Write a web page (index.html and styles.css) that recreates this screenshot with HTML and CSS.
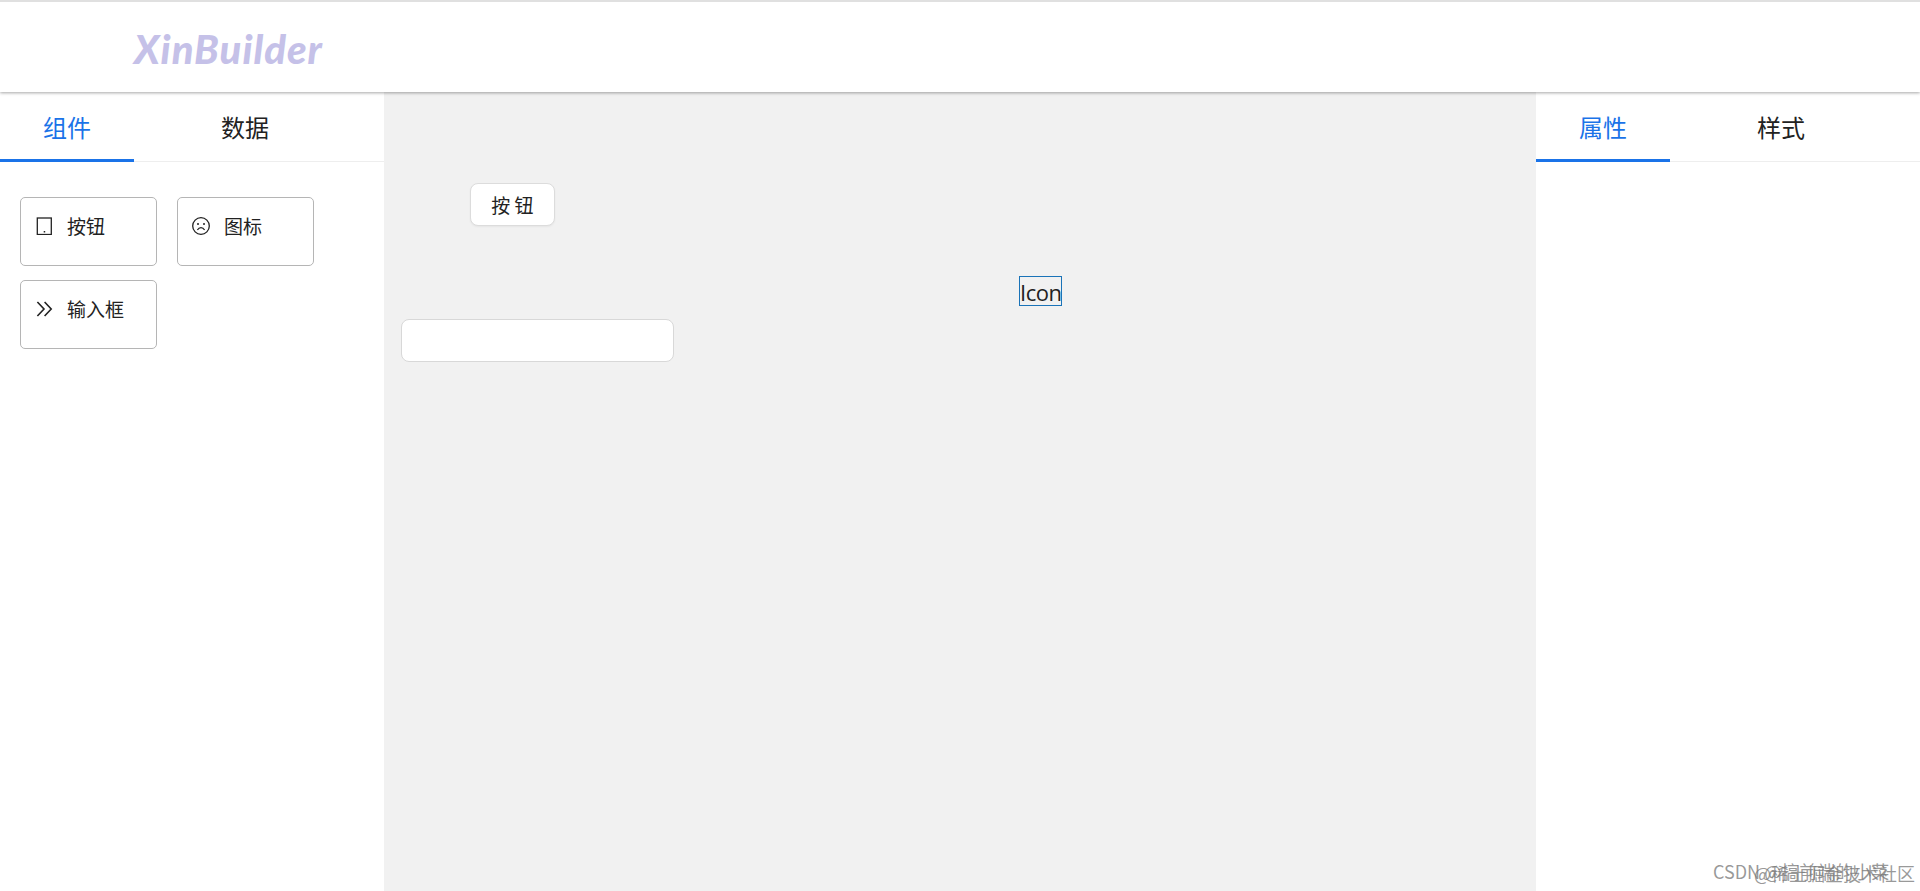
FILE: index.html
```html
<!DOCTYPE html>
<html lang="en">
<head>
  <meta charset="UTF-8">
  <title>XinBuilder</title>
  <link rel="stylesheet" href="styles.css">
</head>
<body>
  <header class="topbar">
    <div class="logo">XinBuilder</div>
  </header>

  <main class="workspace">
    <aside class="panel panel-left">
      <div class="tabs">
        <div class="tab active">组件</div>
        <div class="tab">数据</div>
      </div>
      <div class="palette">
        <div class="palette-item">
          <svg class="palette-icon" viewBox="0 0 18 18" fill="none" stroke="#222" stroke-width="1.3">
            <rect x="2.300" y="1" width="14" height="16.500"/>
            <rect x="8.700" y="14" width="1.500" height="1.500" fill="#222" stroke="none"/>
          </svg>
          <span>按钮</span>
        </div>
        <div class="palette-item">
          <svg class="palette-icon" viewBox="0 0 18 18" fill="none" stroke="#222" stroke-width="1.3">
            <circle cx="9" cy="9" r="8.300"/>
            <circle cx="6" cy="7" r="1" fill="#222" stroke="none"/>
            <circle cx="12" cy="7" r="1" fill="#222" stroke="none"/>
            <path d="M5.400 13c1-1.600 2.200-2.300 3.600-2.300s2.600.7 3.600 2.300"/>
          </svg>
          <span>图标</span>
        </div>
        <div class="palette-item">
          <svg class="palette-icon" viewBox="0 0 18 18" fill="none" stroke="#222" stroke-width="1.6">
            <path d="M2.400 2 9 9l-6.600 7"/>
            <path d="M9.600 2 16.200 9l-6.600 7"/>
          </svg>
          <span>输入框</span>
        </div>
      </div>
    </aside>

    <section class="canvas">
      <button class="canvas-btn">按 钮</button>
      <div class="canvas-icon">Icon</div>
      <input class="canvas-input" type="text">
    </section>

    <aside class="panel panel-right">
      <div class="tabs">
        <div class="tab active">属性</div>
        <div class="tab">样式</div>
      </div>
    </aside>
  </main>

  <div class="watermark">
    <span class="mark-one">CSDN @搞前端的小菜</span>
    <span class="mark-two">@稀土掘金技术社区</span>
  </div>
</body>
</html>
```

FILE: styles.css
```css
* {
  box-sizing: border-box;
}

html, body {
  height: 100%;
}

body {
  margin: 0;
  display: flex;
  flex-direction: column;
  overflow: hidden;
  background-color: #fff;
  font-family: "Open Sans", "Noto Sans CJK SC", sans-serif;
  color: #222;
}

.topbar {
  position: relative;
  z-index: 2;
  flex: none;
  height: 92px;
  padding: 4px 0 0 134px;
  display: flex;
  align-items: center;
  background-color: #fff;
  border-top: 2px solid #e0e0e0;
  box-shadow: 0 1px 3px rgba(0, 0, 0, 0.35);
}

.logo {
  font-family: Lato, sans-serif;
  font-size: 40px;
  font-weight: 900;
  font-style: italic;
  letter-spacing: 1px;
  line-height: 1;
  color: #c5c1e8;
}

.workspace {
  flex: 1;
  display: flex;
  min-height: 0;
}

.panel {
  flex: none;
  width: 384px;
  background-color: #fff;
}

.tabs {
  display: flex;
  height: 70px;
  border-bottom: 1px solid #eee;
}

.tab {
  width: 134px;
  margin-right: 44px;
  height: 70px;
  line-height: 69px;
  text-align: center;
  font-size: 24px;
  font-family: "Noto Sans CJK SC", sans-serif;
  font-weight: 400;
}

.tab.active {
  color: #1a73e8;
  border-bottom: 3px solid #1a73e8;
}

.palette {
  padding: 35px 20px;
  display: flex;
  flex-wrap: wrap;
  gap: 14px 20px;
}

.palette-item {
  width: 137px;
  height: 69px;
  padding: 14px 14px 0;
  display: flex;
  align-items: flex-start;
  gap: 14px;
  border: 1px solid #b5b5b5;
  border-radius: 5px;
  font-family: "Noto Sans CJK SC", sans-serif;
  font-size: 19px;
  font-weight: 400;
  line-height: 28px;
}

.palette-icon {
  flex: none;
  width: 18px;
  height: 18px;
  margin-top: 5px;
}

.canvas {
  position: relative;
  flex: 1;
  background-color: #f1f1f1;
}

.canvas-btn {
  position: absolute;
  left: 86px;
  top: 91px;
  width: 85px;
  height: 43px;
  padding: 0;
  background-color: #fff;
  border: 1px solid #dcdcdc;
  border-radius: 8px;
  box-shadow: 0 1px 2px rgba(0, 0, 0, 0.05);
  font-family: "Noto Sans CJK SC", sans-serif;
  font-size: 19px;
  font-weight: 400;
  color: #222;
}

.canvas-icon {
  position: absolute;
  left: 635px;
  top: 184px;
  width: 43px;
  height: 30px;
  border: 1px solid #1a73b8;
  font-size: 22px;
  line-height: 31px;
  text-align: center;
  letter-spacing: -0.5px;
}

.canvas-input {
  position: absolute;
  left: 17px;
  top: 227px;
  width: 273px;
  height: 43px;
  background-color: #fff;
  border: 1px solid #d8d8d8;
  border-radius: 8px;
}

.watermark {
  position: absolute;
  right: 0;
  bottom: 0;
  width: 230px;
  height: 40px;
  font-family: "Noto Sans CJK SC", sans-serif;
  font-size: 18px;
  font-weight: 400;
  color: rgba(120, 120, 120, 0.75);
  white-space: nowrap;
}

.mark-one {
  position: absolute;
  left: 23px;
  top: 7px;
}

.mark-two {
  position: absolute;
  left: 64px;
  top: 9px;
}
```
